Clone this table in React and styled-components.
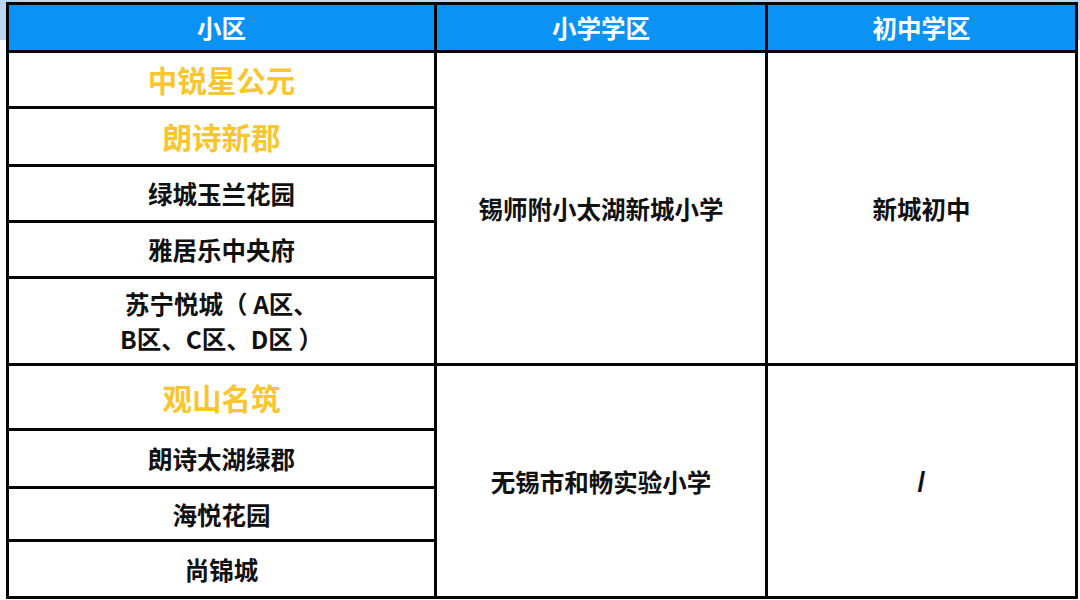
import React from 'react';
import styled, { createGlobalStyle } from 'styled-components';

const GlobalStyle = createGlobalStyle`
  html, body {
    margin: 0;
    padding: 0;
  }
  body {
    background: linear-gradient(to bottom, #bcd5f3 0, #bcd5f3 40px, #ffffff 40px);
    font-family: "Noto Sans CJK SC", "Noto Sans", sans-serif;
  }
`;

const Page = styled.div`
  padding: 2px 0 0 6px;
  width: 1080px;
  height: 600px;
  box-sizing: border-box;
  overflow: hidden;
`;

const Grid = styled.div`
  display: grid;
  grid-template-columns: 425px 328px 307px;
  grid-template-rows: 45px 53px 55px 53px 53px 84px 62px 55px 50px 54px;
  gap: 3px;
  padding: 3px;
  width: max-content;
  background: #050505;
`;

const HeadCell = styled.div`
  background: #0a93f5;
  color: #ffffff;
  font-size: 24.5px;
  font-weight: 700;
  display: flex;
  align-items: center;
  justify-content: center;
`;

const Cell = styled.div`
  background: #ffffff;
  color: ${(p) => (p.highlight ? '#f7c631' : '#111111')};
  font-size: ${(p) => (p.highlight ? '29.5px' : '24.5px')};
  font-weight: 700;
  line-height: 35px;
  text-align: center;
  display: flex;
  align-items: center;
  justify-content: center;
  grid-column: ${(p) => p.col || 'auto'};
  grid-row: ${(p) => p.row || 'auto'};
`;

const Slash = styled.span`
  font-family: "Liberation Sans", Arial, sans-serif;
  font-size: 28px;
  font-weight: 700;
`;

const groups = [
  {
    primary: '锡师附小太湖新城小学',
    middle: '新城初中',
    rows: [
      { name: '中锐星公元', highlight: true },
      { name: '朗诗新郡', highlight: true },
      { name: '绿城玉兰花园' },
      { name: '雅居乐中央府' },
      { name: ['苏宁悦城（ A区、', 'B区、C区、D区 ）'] },
    ],
  },
  {
    primary: '无锡市和畅实验小学',
    middle: '/',
    rows: [
      { name: '观山名筑', highlight: true },
      { name: '朗诗太湖绿郡' },
      { name: '海悦花园' },
      { name: '尚锦城' },
    ],
  },
];

const App = () => {
  let rowIndex = 2;
  const cells = [];

  groups.forEach((g, gi) => {
    const start = rowIndex;
    g.rows.forEach((r, ri) => {
      cells.push(
        <Cell key={`n-${gi}-${ri}`} col="1" row={`${rowIndex}`} highlight={r.highlight}>
          {Array.isArray(r.name) ? (
            <span>
              {r.name[0]}
              <br />
              {r.name[1]}
            </span>
          ) : (
            r.name
          )}
        </Cell>
      );
      rowIndex += 1;
    });
    const span = `${start} / ${rowIndex}`;
    cells.push(
      <Cell key={`p-${gi}`} col="2" row={span}>
        {g.primary}
      </Cell>
    );
    cells.push(
      <Cell key={`m-${gi}`} col="3" row={span}>
        {g.middle === '/' ? <Slash>/</Slash> : g.middle}
      </Cell>
    );
  });

  return (
    <>
      <GlobalStyle />
      <Page>
        <Grid>
          <HeadCell>小区</HeadCell>
          <HeadCell>小学学区</HeadCell>
          <HeadCell>初中学区</HeadCell>
          {cells}
        </Grid>
      </Page>
    </>
  );
};

export default App;
